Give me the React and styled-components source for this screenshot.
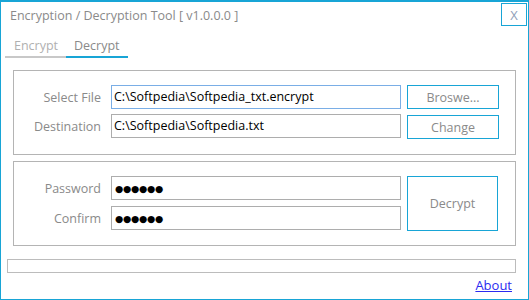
import React from 'react';
import styled, { createGlobalStyle } from 'styled-components';

const GlobalStyle = createGlobalStyle`
  html, body {
    margin: 0;
    padding: 0;
    background: #ffffff;
  }
  * {
    box-sizing: border-box;
  }
`;

const CYAN = '#18a5d6';
const GRAY_BORDER = '#b4b4b4';
const FONT = '"Open Sans", "Noto Sans", sans-serif';

const Window = styled.div`
  width: 529px;
  height: 300px;
  border: 1px solid ${CYAN};
  border-top-width: 2px;
  background: #fff;
  font-family: ${FONT};
  display: flex;
  flex-direction: column;
`;

const TitleBar = styled.div`
  display: flex;
  align-items: flex-start;
  justify-content: space-between;
  padding: 1px 1px 0 9px;
  height: 34px;
`;

const Title = styled.div`
  font-size: 12.5px;
  color: #8a8a8a;
  line-height: 26px;
`;

const CloseButton = styled.div`
  width: 26px;
  height: 23px;
  border: 1px solid ${CYAN};
  color: #8fa0b8;
  font-size: 13px;
  display: flex;
  align-items: center;
  justify-content: center;
`;

const Tabs = styled.div`
  display: flex;
  padding-left: 4px;
  height: 22px;
`;

const Tab = styled.div`
  width: ${p => p.$width}px;
  padding-left: ${p => p.$indent}px;
  font-size: 12.5px;
  line-height: 19px;
  color: ${p => (p.$active ? '#8a8a8a' : '#b0b0b0')};
  border-bottom: 2px solid ${p => (p.$active ? CYAN : '#c8c8c8')};
`;

const Content = styled.div`
  display: flex;
  flex-direction: column;
  gap: 6px;
  padding: 12px 12px 0 12px;
`;

const Group = styled.div`
  border: 1px solid ${GRAY_BORDER};
  height: 85px;
  padding: 14px 17px 0 0;
  display: flex;
  gap: 6px;
`;

const Fields = styled.div`
  display: flex;
  flex-direction: column;
  gap: ${p => p.$gap}px;
`;

const FieldRow = styled.div`
  display: flex;
  align-items: center;
  gap: 10px;
`;

const Label = styled.div`
  width: 87px;
  text-align: right;
  font-size: 12.5px;
  color: #8a8a8a;
`;

const Input = styled.div`
  width: 290px;
  height: 24px;
  border: 1px solid ${p => (p.$focused ? '#7aaee6' : '#adadad')};
  padding-left: 2px;
  font-size: 12.5px;
  line-height: 22px;
  color: #000;
  white-space: nowrap;
  overflow: hidden;
`;

const Dots = styled.span`
  font-family: "DejaVu Sans", sans-serif;
  font-size: 9.5px;
  letter-spacing: -0.3px;
  padding-left: 1px;
`;

const Buttons = styled.div`
  display: flex;
  flex-direction: column;
  gap: 6px;
`;

const Button = styled.div`
  width: 92px;
  height: ${p => p.$height}px;
  border: 1px solid ${CYAN};
  color: #8a8a8a;
  font-size: 12.5px;
  display: flex;
  align-items: center;
  justify-content: center;
`;

const Progress = styled.div`
  margin: 13px 12px 0 6px;
  height: 14px;
  border: 1px solid #bcbcbc;
`;

const Footer = styled.div`
  display: flex;
  justify-content: flex-end;
  padding: 3px 16px 0 0;
`;

const AboutLink = styled.a`
  font-size: 13px;
  color: #2a2af0;
  text-decoration: underline;
  cursor: pointer;
`;

export default function App() {
  return (
    <>
      <GlobalStyle />
      <Window>
        <TitleBar>
          <Title>Encryption / Decryption Tool [ v1.0.0.0 ]</Title>
          <CloseButton>X</CloseButton>
        </TitleBar>
        <Tabs>
          <Tab $width={61} $indent={9}>Encrypt</Tab>
          <Tab $width={62} $indent={8} $active>Decrypt</Tab>
        </Tabs>
        <Content>
          <Group>
            <Fields $gap={5}>
              <FieldRow>
                <Label>Select File</Label>
                <Input $focused>C:\Softpedia\Softpedia_txt.encrypt</Input>
              </FieldRow>
              <FieldRow>
                <Label>Destination</Label>
                <Input>C:\Softpedia\Softpedia.txt</Input>
              </FieldRow>
            </Fields>
            <Buttons>
              <Button $height={24}>Broswe...</Button>
              <Button $height={24}>Change</Button>
            </Buttons>
          </Group>
          <Group>
            <Fields $gap={6}>
              <FieldRow>
                <Label>Password</Label>
                <Input><Dots>●●●●●●</Dots></Input>
              </FieldRow>
              <FieldRow>
                <Label>Confirm</Label>
                <Input><Dots>●●●●●●</Dots></Input>
              </FieldRow>
            </Fields>
            <Button $height={55}>Decrypt</Button>
          </Group>
        </Content>
        <Progress />
        <Footer>
          <AboutLink>About</AboutLink>
        </Footer>
      </Window>
    </>
  );
}
